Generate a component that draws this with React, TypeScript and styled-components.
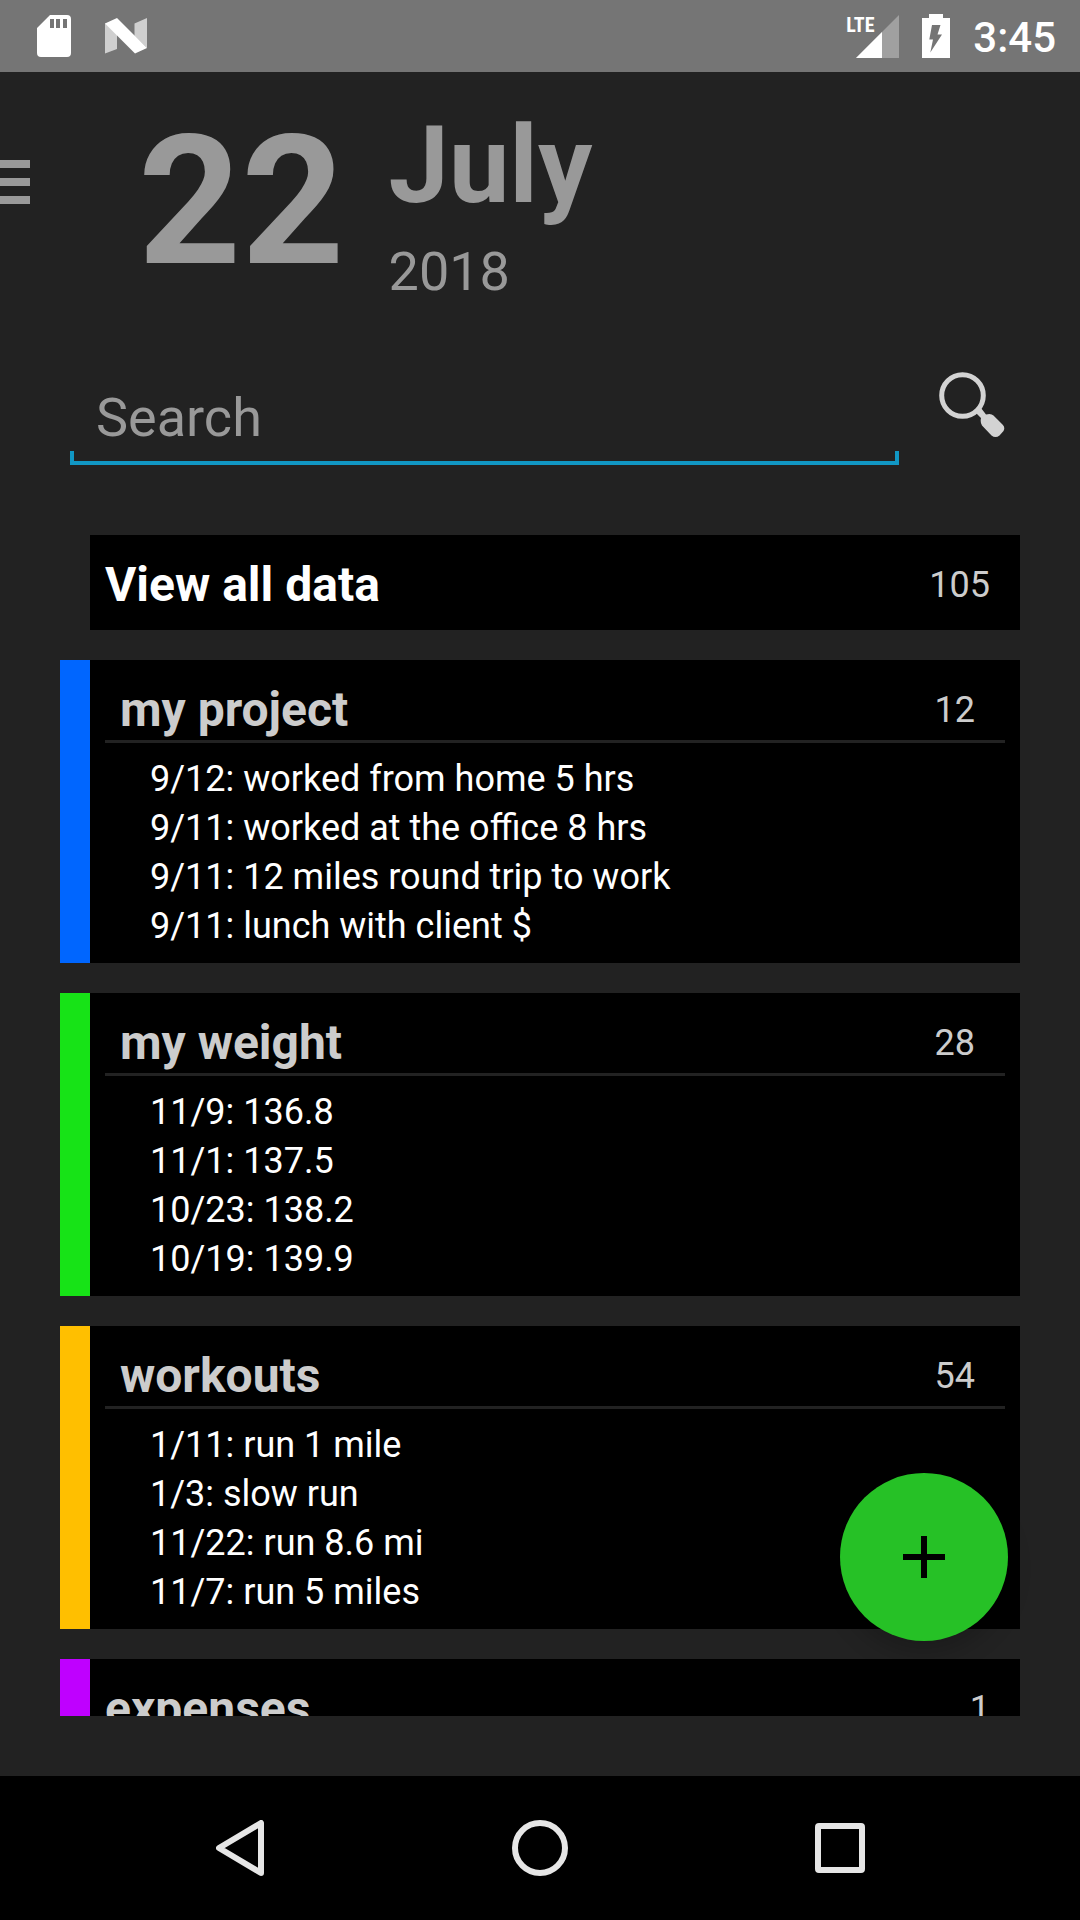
import React from "react";
import styled, { createGlobalStyle } from "styled-components";

const GlobalStyle = createGlobalStyle`
  *, *::before, *::after { box-sizing: border-box; }
  body { margin: 0; background: #222; }
  button { border: 0; padding: 0; background: none; color: inherit; font: inherit; cursor: pointer; }
  h1, h2, p, ul { margin: 0; padding: 0; font-weight: inherit; }
`;

const Screen = styled.div`
  position: relative;
  display: flex;
  flex-direction: column;
  height: 100vh;
  overflow: hidden;
  background: #222;
  color: #fff;
  font-family: Roboto, "Liberation Sans", sans-serif;
`;

const StatusBar = styled.div`
  display: flex;
  flex: none;
  align-items: center;
  justify-content: space-between;
  height: 72px;
  padding: 0 24px 0 36px;
  background: #757575;
`;

const StatusGroup = styled.div<{ $gap: number }>`
  display: flex;
  align-items: center;
  gap: ${(p) => p.$gap}px;

  svg {
    display: block;
  }
`;

const Signal = styled.div`
  position: relative;
  padding-left: 10px;
`;

const NetworkType = styled.span`
  position: absolute;
  top: 0;
  left: 0;
  font: bold 20px/20px "Roboto Condensed", "Liberation Sans Narrow", Roboto, sans-serif;
`;

const Clock = styled.time`
  padding-top: 4px;
  font-size: 42px;
  line-height: 48px;
  font-weight: 500;
`;

const Header = styled.header`
  display: flex;
  flex: none;
  align-items: flex-start;
  padding-top: 30px;
  color: #999;
`;

const MenuButton = styled.button`
  display: flex;
  flex-direction: column;
  justify-content: center;
  gap: 10px;
  width: 30px;
  height: 160px;
  margin-right: 108px;
`;

const MenuBar = styled.span`
  height: 8px;
  background: #999;
`;

const Day = styled.span`
  margin-right: 44px;
  font-size: 180px;
  line-height: 200px;
  font-weight: 700;
`;

const MonthYear = styled.span`
  display: flex;
  flex-direction: column;
  gap: 12px;
`;

const DateTitle = styled.h1`
  display: flex;
`;

const Month = styled.span`
  font-size: 108px;
  line-height: 126px;
  font-weight: 700;
`;

const Year = styled.span`
  font-size: 54px;
  line-height: 64px;
`;

const SearchForm = styled.form`
  display: flex;
  flex: none;
  gap: 25px;
  margin: 70px 60px 70px 70px;
`;

const accent = "linear-gradient(#1197c4, #1197c4)";

const SearchInput = styled.input`
  flex: 1;
  min-width: 0;
  height: 91px;
  padding: 11px 26px 16px;
  border: 0;
  border-radius: 0;
  outline: 0;
  background:
    ${accent} bottom / 100% 4px no-repeat,
    ${accent} left bottom / 4px 14px no-repeat,
    ${accent} right bottom / 4px 14px no-repeat;
  color: #fff;
  font: 54px/64px Roboto, "Liberation Sans", sans-serif;

  &::placeholder {
    color: #999;
    opacity: 1;
  }
`;

const SearchButton = styled.button`
  display: flex;
  align-items: center;
  justify-content: center;
  width: 96px;
  height: 62px;
`;

const Categories = styled.main`
  display: flex;
  flex: 1;
  flex-direction: column;
  gap: 30px;
  min-height: 0;
  margin: 0 60px 60px;
  overflow: hidden;
`;

const Card = styled.section<{ $color: string }>`
  flex: none;
  border-left: 30px solid ${(p) => p.$color};
  background: #000;
  background-clip: padding-box;
`;

const SummaryRow = styled.div<{ $color: string }>`
  display: flex;
  align-items: center;
  justify-content: space-between;
  padding: 22px 30px 17px 15px;
  color: ${(p) => p.$color};
`;

const CardHeader = styled.div`
  display: flex;
  align-items: center;
  justify-content: space-between;
  margin: 0 15px;
  padding: 22px 30px 2px 15px;
  border-bottom: 3px solid #222;
  color: #ccc;
`;

const Title = styled.h2`
  font-size: 48px;
  line-height: 56px;
  font-weight: 700;
`;

const Count = styled.span`
  color: #ccc;
  font-size: 36px;
  line-height: 56px;
`;

const Entries = styled.ul`
  padding: 12px 30px 12px 60px;
  list-style: none;
`;

const Entry = styled.li`
  font-size: 36px;
  line-height: 49px;
`;

const AddButton = styled.button`
  position: absolute;
  right: 72px;
  bottom: 279px;
  display: flex;
  align-items: center;
  justify-content: center;
  width: 168px;
  height: 168px;
  border-radius: 50%;
  background: #26c126;
  box-shadow: 0 12px 24px rgba(0, 0, 0, 0.2);
`;

const NavBar = styled.nav`
  display: flex;
  flex: none;
  height: 144px;
  padding: 0 90px;
  background: #000;
`;

const NavButton = styled.button`
  display: flex;
  flex: 1;
  align-items: center;
  justify-content: center;
`;

type Category = {
  name: string;
  count: number;
  color: string;
  entries: string[];
};

const categories: Category[] = [
  {
    name: "my project",
    count: 12,
    color: "#0066ff",
    entries: [
      "9/12: worked from home 5 hrs",
      "9/11: worked at the office 8 hrs",
      "9/11: 12 miles round trip to work",
      "9/11: lunch with client $",
    ],
  },
  {
    name: "my weight",
    count: 28,
    color: "#17e317",
    entries: ["11/9: 136.8", "11/1: 137.5", "10/23: 138.2", "10/19: 139.9"],
  },
  {
    name: "workouts",
    count: 54,
    color: "#ffbf00",
    entries: ["1/11: run 1 mile", "1/3: slow run", "11/22: run 8.6 mi", "11/7: run 5 miles"],
  },
  { name: "expenses", count: 1, color: "#bf00ff", entries: [] },
];

const SdCardIcon = () => (
  <svg width="36" height="44" viewBox="0 0 36 44" aria-hidden="true">
    <path
      fill="#fff"
      fillRule="evenodd"
      d="M14 1h17a4 4 0 0 1 4 4v34a4 4 0 0 1-4 4H5a4 4 0 0 1-4-4V14zM14 5v9h4V5zM20 5v9h4V5zM27 5v9h4V5z"
    />
  </svg>
);

const NougatIcon = () => (
  <svg width="44" height="36" viewBox="0 0 44 36" aria-hidden="true">
    <path fill="#cfcfcf" d="M1 5l12 10v16L1 35.500zM30.500 5.500L43 0v30L30.500 18z" />
    <path fill="#fff" d="M1 5.500L13 0l30 30-12 5.500z" />
  </svg>
);

const SignalIcon = () => (
  <svg width="43" height="43" viewBox="0 0 43 43" aria-hidden="true">
    <path fill="#a0a0a0" d="M43 0v43H0z" />
    <path fill="#fff" d="M26 17v26H0z" />
  </svg>
);

const BatteryIcon = () => (
  <svg width="28" height="44" viewBox="0 0 28 44" aria-hidden="true">
    <path
      fill="#fff"
      fillRule="evenodd"
      d="M7 0h14v4h7v40H0V4h7zM10 11L7.300 25.500H11L8.300 38.600 20 20.500h-4.500L18.500 11z"
    />
  </svg>
);

const SearchIcon = () => (
  <svg width="66" height="66" viewBox="0 0 66 66" aria-hidden="true">
    <circle cx="23.500" cy="23.500" r="20.800" fill="none" stroke="#d3d3d3" strokeWidth="5" />
    <path
      fill="#d3d3d3"
      d="M37 41l5-5 5 6.500q5-1.500 7.500 1l9 9q3 3 1 6.500l-4 4.500q-4 3-8 0L43 53.500q-2-3-1-7.500z"
    />
  </svg>
);

export default function App() {
  return (
    <Screen>
      <GlobalStyle />
      <StatusBar>
        <StatusGroup $gap={32}>
          <SdCardIcon />
          <NougatIcon />
        </StatusGroup>
        <StatusGroup $gap={23}>
          <Signal>
            <NetworkType>LTE</NetworkType>
            <SignalIcon />
          </Signal>
          <BatteryIcon />
          <Clock>3:45</Clock>
        </StatusGroup>
      </StatusBar>

      <Header>
        <MenuButton type="button" aria-label="Menu">
          <MenuBar />
          <MenuBar />
          <MenuBar />
        </MenuButton>
        <DateTitle>
          <Day>22</Day>
          <MonthYear>
            <Month>July</Month>
            <Year>2018</Year>
          </MonthYear>
        </DateTitle>
      </Header>

      <SearchForm role="search" onSubmit={(e: React.FormEvent) => e.preventDefault()}>
        <SearchInput type="text" placeholder="Search" aria-label="Search" />
        <SearchButton type="submit" aria-label="Run search">
          <SearchIcon />
        </SearchButton>
      </SearchForm>

      <Categories>
        <Card $color="transparent">
          <SummaryRow $color="#fff">
            <Title>View all data</Title>
            <Count>105</Count>
          </SummaryRow>
        </Card>
        {categories.map(({ name, count, color, entries }) => (
          <Card key={name} $color={color}>
            {entries.length > 0 ? (
              <>
                <CardHeader>
                  <Title>{name}</Title>
                  <Count>{count}</Count>
                </CardHeader>
                <Entries>
                  {entries.map((entry) => (
                    <Entry key={entry}>{entry}</Entry>
                  ))}
                </Entries>
              </>
            ) : (
              <SummaryRow $color="#ccc">
                <Title>{name}</Title>
                <Count>{count}</Count>
              </SummaryRow>
            )}
          </Card>
        ))}
      </Categories>

      <AddButton type="button" aria-label="Add entry">
        <svg width="42" height="42" viewBox="0 0 42 42" aria-hidden="true">
          <path d="M18 0h6v18h18v6H24v18h-6V24H0v-6h18z" fill="#000" />
        </svg>
      </AddButton>

      <NavBar aria-label="System navigation">
        <NavButton type="button" aria-label="Back">
          <svg width="48" height="56" viewBox="0 0 48 56" aria-hidden="true">
            <path d="M45 3v50L3 28z" fill="none" stroke="#e6e6e6" strokeWidth="6" strokeLinejoin="round" />
          </svg>
        </NavButton>
        <NavButton type="button" aria-label="Home">
          <svg width="56" height="56" viewBox="0 0 56 56" aria-hidden="true">
            <circle cx="28" cy="28" r="25" fill="none" stroke="#e6e6e6" strokeWidth="6" />
          </svg>
        </NavButton>
        <NavButton type="button" aria-label="Recent apps">
          <svg width="50" height="50" viewBox="0 0 50 50" aria-hidden="true">
            <rect x="3" y="3" width="44" height="44" rx="1" fill="none" stroke="#e6e6e6" strokeWidth="6" />
          </svg>
        </NavButton>
      </NavBar>
    </Screen>
  );
}
